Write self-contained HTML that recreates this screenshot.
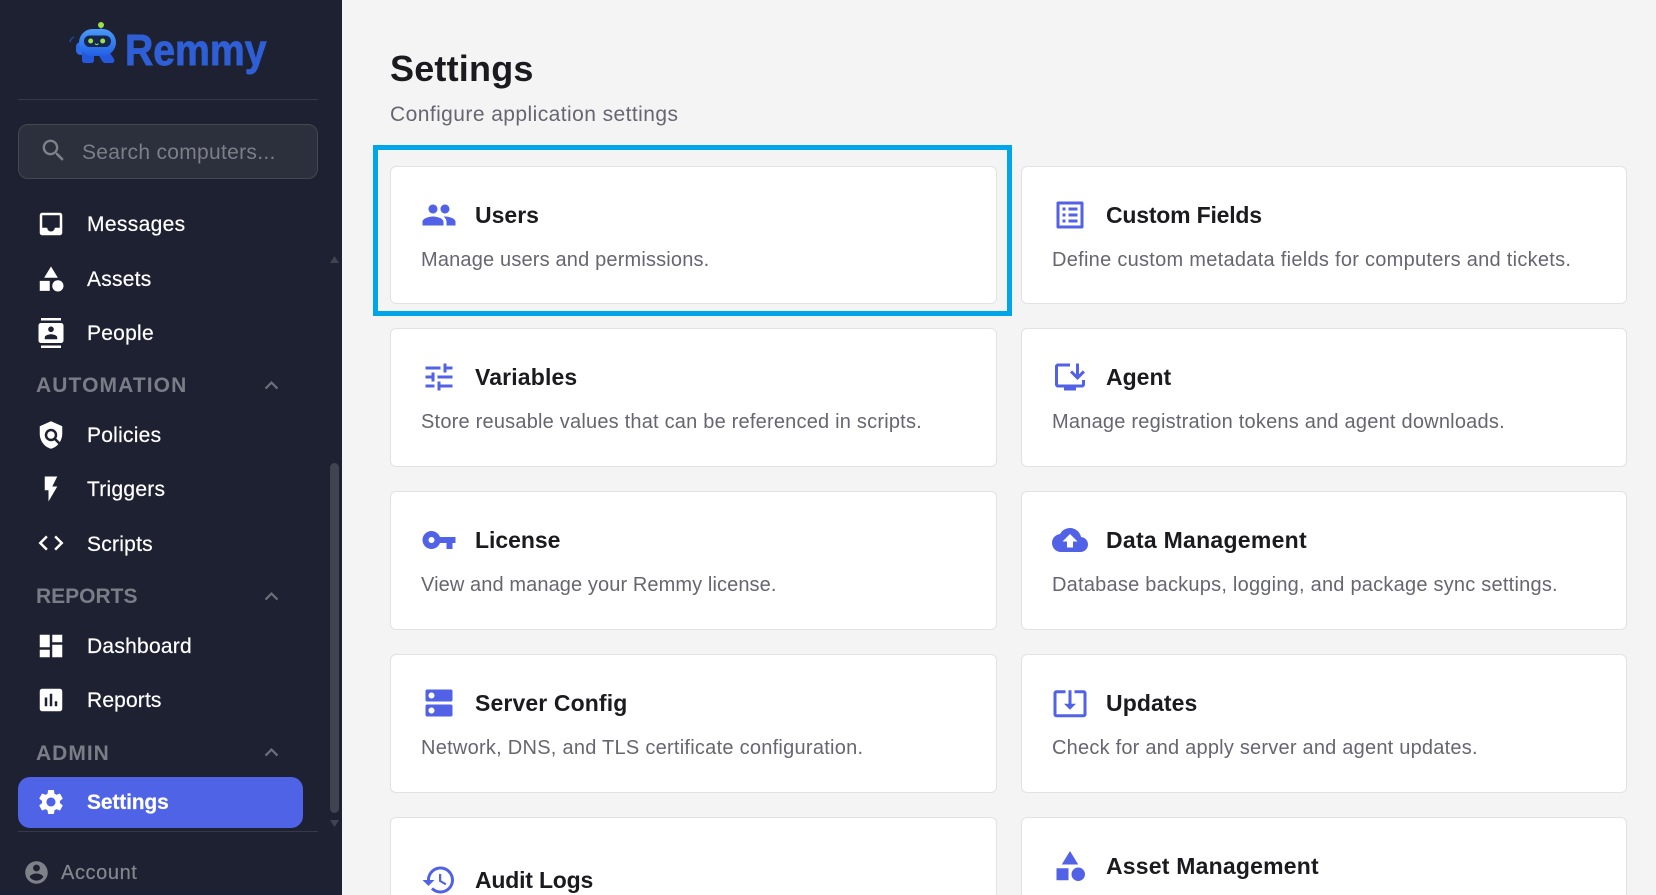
<!DOCTYPE html>
<html lang="en"><head><meta charset="utf-8"><title>Settings</title>
<style>
html,body{margin:0;padding:0;width:1656px;height:895px;overflow:hidden;background:#f4f4f4;font-family:"Liberation Sans",Arial,sans-serif}
*{box-sizing:border-box}
#root{position:relative;width:1656px;height:895px;overflow:hidden;background:#f4f4f4}
.a{position:absolute}
#side{position:absolute;left:0;top:0;width:342px;height:895px;background:#1d2131;color:#fff;overflow:hidden}
.nav{position:absolute;left:87px;font-size:21px;line-height:30px;letter-spacing:.25px;color:#fff;white-space:nowrap;-webkit-text-stroke:.2px #fff}
.ni{position:absolute;left:36px;width:30px;height:30px;fill:#fff}
.sec{position:absolute;left:36px;font-size:21px;font-weight:700;line-height:30px;color:#7a7d88;white-space:nowrap}
.chev{position:absolute;left:258px;width:27px;height:27px;fill:#6c6f7a}
.card{position:absolute;width:607px;height:139px;background:#fff;border:1px solid #e2e2e2;border-radius:6px}
.ci{position:absolute;left:30px;top:30px;width:36px;height:36px;fill:#5262e6}
.t{position:absolute;left:84px;top:33px;font-size:23px;font-weight:700;line-height:30px;color:#1b1b1f;white-space:nowrap}
.d{position:absolute;left:30px;top:78px;font-size:20px;line-height:30px;color:#666670;white-space:nowrap}
</style></head><body>
<div id="root">
<div id="side">
  <svg class="a" style="left:66px;top:18px" width="56" height="50" viewBox="66 18 56 50">
    <defs><linearGradient id="rb" x1="0" y1="0" x2="0" y2="1"><stop offset="0" stop-color="#4a9af8"/><stop offset="1" stop-color="#2260e4"/></linearGradient></defs>
    <path d="M74 37c-2 1-4 3-4 5" fill="none" stroke="#1d4a9e" stroke-width="1.500"/>
    <path d="M101 25v6" stroke="#2a50a8" stroke-width="2"/>
    <circle cx="101" cy="25" r="3" fill="#9be04a"/>
    <rect x="76" y="42" width="9" height="13" rx="4.500" fill="#2c6ce6"/>
    <path d="M82 48h12v12c0 2-1 3-3 3h-6c-2 0-3-1-3-3z" fill="#2558dc"/>
    <path d="M96 50h12l6 9c1 2 0 4-2 4h-7c-1 0-2-1-3-2z" fill="#2558dc"/>
    <rect x="79" y="29" width="37" height="27" rx="13.500" fill="url(#rb)"/>
    <rect x="84" y="35.500" width="27" height="11.500" rx="5.700" fill="#16274f"/>
    <circle cx="90.700" cy="41" r="2.500" fill="#9be04a"/>
    <circle cx="102.700" cy="41" r="2.500" fill="#9be04a"/>
    <path d="M95 43.500c1 1.500 2.500 1.500 3.500 0" fill="none" stroke="#9be04a" stroke-width="1"/>
  </svg>
  <div class="a" style="left:125px;top:24px;font-size:44px;line-height:54px;font-weight:700;color:#2f5fd6;-webkit-text-stroke:.9px #2f5fd6;transform:scaleX(.89);transform-origin:0 0">Remmy</div>
  <div class="a" style="left:18px;top:99px;width:300px;height:1px;background:#363a48"></div>
  <div class="a" style="left:18px;top:124px;width:300px;height:55px;background:#2c2f3c;border:1px solid #444754;border-radius:10px"></div>
  <svg class="a" style="left:39px;top:136px;fill:#7f8189" width="29" height="29" viewBox="0 0 24 24"><path d="M15.500 14h-.79l-.28-.27C15.410 12.590 16 11.110 16 9.500 16 5.910 13.090 3 9.500 3S3 5.910 3 9.500 5.910 16 9.500 16c1.610 0 3.090-.59 4.230-1.570l.27.28v.79l5 4.990L20.490 19l-4.990-5zm-6 0C7.010 14 5 11.990 5 9.500S7.010 5 9.500 5 14 7.010 14 9.500 11.990 14 9.500 14z"/></svg>
  <div class="a" style="left:82px;top:138px;font-size:21px;line-height:30px;letter-spacing:.3px;color:#7c7f88;white-space:nowrap">Search computers...</div>

  <svg class="ni" style="top:209px" viewBox="0 0 24 24"><path d="M19 3H4.990c-1.110 0-1.980.89-1.980 2L3 19c0 1.100.88 2 1.990 2H19c1.100 0 2-.9 2-2V5c0-1.110-.9-2-2-2zm0 12h-4c0 1.660-1.350 3-3 3s-3-1.340-3-3H4.990V5H19v10z"/></svg>
  <div class="nav" style="top:210px;letter-spacing:.35px">Messages</div>
  <svg class="ni" style="top:264px" viewBox="0 0 24 24"><path d="M12 2l-5.500 9h11z"/><circle cx="17.500" cy="17.500" r="4.500"/><path d="M3 13.500h8v8H3z"/></svg>
  <div class="nav" style="top:265px">Assets</div>
  <svg class="ni" style="top:318px" viewBox="0 0 24 24"><path d="M20 0H4v2h16V0zM4 24h16v-2H4v2zM20 4H4c-1.100 0-2 .9-2 2v12c0 1.100.9 2 2 2h16c1.100 0 2-.9 2-2V6c0-1.100-.9-2-2-2zm-8 2.750c1.240 0 2.250 1.010 2.250 2.250s-1.010 2.250-2.250 2.250S9.750 10.240 9.750 9 10.760 6.750 12 6.750zM17 17H7v-1.500c0-1.670 3.330-2.500 5-2.500s5 .83 5 2.500V17z"/></svg>
  <div class="nav" style="top:319px">People</div>

  <div class="sec" style="top:371px;letter-spacing:1.1px">AUTOMATION</div>
  <svg class="chev" style="top:372px" viewBox="0 0 24 24"><path d="M12 8l-6 6 1.410 1.410L12 10.830l4.590 4.580L18 14z"/></svg>

  <svg class="ni" style="top:420px" viewBox="0 0 24 24"><path d="M21 5l-9-4-9 4v6c0 5.550 3.840 10.740 9 12 2.300-.56 4.330-1.900 5.880-3.710l-3.120-3.120c-1.940 1.290-4.580 1.070-6.290-.64-1.950-1.950-1.950-5.120 0-7.070 1.950-1.950 5.120-1.950 7.070 0 1.710 1.710 1.920 4.350.64 6.290l2.900 2.900C20.290 15.690 21 13.380 21 11V5z"/><circle cx="12" cy="12" r="3"/></svg>
  <div class="nav" style="top:421px">Policies</div>
  <svg class="ni" style="top:474px" viewBox="0 0 24 24"><path d="M7 2v11h3v9l7-12h-4l4-8z"/></svg>
  <div class="nav" style="top:475px">Triggers</div>
  <svg class="ni" style="top:528px" viewBox="0 0 24 24"><path d="M9.400 16.600L4.800 12l4.600-4.600L8 6l-6 6 6 6 1.400-1.400zm5.200 0l4.600-4.600-4.600-4.600L16 6l6 6-6 6-1.400-1.400z"/></svg>
  <div class="nav" style="top:530px">Scripts</div>

  <div class="sec" style="top:582px">REPORTS</div>
  <svg class="chev" style="top:583px" viewBox="0 0 24 24"><path d="M12 8l-6 6 1.410 1.410L12 10.830l4.590 4.580L18 14z"/></svg>

  <svg class="ni" style="top:631px" viewBox="0 0 24 24"><path d="M3 13h8V3H3v10zm0 8h8v-6H3v6zm10 0h8V11h-8v10zm0-18v6h8V3h-8z"/></svg>
  <div class="nav" style="top:632px">Dashboard</div>
  <svg class="ni" style="top:685px" viewBox="0 0 24 24"><path d="M19 3H5c-1.100 0-2 .9-2 2v14c0 1.100.9 2 2 2h14c1.100 0 2-.9 2-2V5c0-1.100-.9-2-2-2zM9 17H7v-7h2v7zm4 0h-2V7h2v10zm4 0h-2v-4h2v4z"/></svg>
  <div class="nav" style="top:686px;letter-spacing:.15px">Reports</div>

  <div class="sec" style="top:739px;letter-spacing:1px">ADMIN</div>
  <svg class="chev" style="top:739px" viewBox="0 0 24 24"><path d="M12 8l-6 6 1.410 1.410L12 10.830l4.590 4.580L18 14z"/></svg>

  <div class="a" style="left:18px;top:777px;width:285px;height:51px;background:#4f63e7;border-radius:12px"></div>
  <svg class="ni" style="top:787px" viewBox="0 0 24 24"><path d="M19.140 12.940c.04-.3.06-.61.06-.94 0-.32-.02-.64-.07-.94l2.030-1.580c.18-.14.23-.41.12-.61l-1.920-3.320c-.12-.22-.37-.29-.59-.22l-2.390.96c-.5-.38-1.030-.7-1.620-.94l-.36-2.540c-.04-.24-.24-.41-.48-.41h-3.840c-.24 0-.43.17-.47.41l-.36 2.540c-.59.24-1.130.57-1.620.94l-2.390-.96c-.22-.08-.47 0-.59.22L2.740 8.870c-.12.21-.08.47.12.61l2.030 1.580c-.05.3-.09.63-.09.94s.02.64.07.94l-2.030 1.580c-.18.14-.23.41-.12.61l1.920 3.320c.12.22.37.29.59.22l2.390-.96c.5.38 1.030.7 1.620.94l.36 2.540c.05.24.24.41.48.41h3.840c.24 0 .44-.17.47-.41l.36-2.540c.59-.24 1.130-.56 1.620-.94l2.390.96c.22.08.47 0 .59-.22l1.920-3.320c.12-.22.07-.47-.12-.61l-2.010-1.580zM12 15.600c-1.980 0-3.600-1.620-3.600-3.600s1.620-3.600 3.600-3.600 3.600 1.620 3.600 3.600-1.620 3.600-3.600 3.600z"/></svg>
  <div class="nav" style="top:788px;font-weight:700;letter-spacing:-.15px">Settings</div>

  <div class="a" style="left:18px;top:831px;width:300px;height:1px;background:#363a48"></div>
  <svg class="a" style="left:23px;top:859px;fill:#7f8189" width="27" height="27" viewBox="0 0 24 24"><path d="M12 2C6.480 2 2 6.480 2 12s4.480 10 10 10 10-4.480 10-10S17.520 2 12 2zm0 3c1.660 0 3 1.340 3 3s-1.340 3-3 3-3-1.340-3-3 1.340-3 3-3zm0 14.200c-2.500 0-4.710-1.280-6-3.220.03-1.990 4-3.080 6-3.080 1.990 0 5.970 1.090 6 3.080-1.290 1.940-3.500 3.220-6 3.220z"/></svg>
  <div class="a" style="left:61px;top:858px;font-size:20px;line-height:30px;letter-spacing:.6px;color:#85878f;-webkit-text-stroke:.2px #85878f">Account</div>

  <div class="a" style="left:330px;top:463px;width:9px;height:350px;background:#3f4450;border-radius:5px"></div>
  <svg class="a" style="left:330px;top:256px" width="9" height="7"><path d="M4.500 0L9 7H0z" fill="#3f4450"/></svg>
  <svg class="a" style="left:330px;top:820px" width="9" height="7"><path d="M0 0H9L4.500 7z" fill="#3f4450"/></svg>
</div>

<h1 class="a" style="margin:0;left:390px;top:47px;font-size:36px;line-height:44px;font-weight:700;letter-spacing:.2px;color:#1b1b1f">Settings</h1>
<div class="a" style="left:390px;top:100px;font-size:21px;line-height:30px;letter-spacing:.43px;color:#666670;white-space:nowrap">Configure application settings</div>

<div class="a" style="left:373px;top:145px;width:639px;height:171px;border:5px solid #00a6e8"></div>

<div class="card" style="left:390px;top:166px;height:138px"><svg class="ci" viewBox="0 0 24 24"><path d="M16 11c1.660 0 2.990-1.340 2.990-3S17.660 5 16 5c-1.660 0-3 1.340-3 3s1.340 3 3 3zm-8 0c1.660 0 2.990-1.340 2.990-3S9.660 5 8 5C6.340 5 5 6.340 5 8s1.340 3 3 3zm0 2c-2.330 0-7 1.170-7 3.500V19h14v-2.500c0-2.330-4.670-3.500-7-3.500zm8 0c-.29 0-.62.02-.97.05 1.160.84 1.970 1.970 1.970 3.450V19h6v-2.500c0-2.330-4.670-3.500-7-3.500z"/></svg><div class="t">Users</div><div class="d" style="letter-spacing:.17px">Manage users and permissions.</div></div>
<div class="card" style="left:1021px;top:166px;width:606px;height:138px"><svg class="ci" viewBox="0 0 24 24"><path d="M19 5v14H5V5h14m1.100-2H3.900c-.5 0-.9.4-.9.9v16.200c0 .4.4.9.9.9h16.200c.4 0 .9-.5.9-.9V3.900c0-.5-.5-.9-.9-.9zM11 7h6v2h-6V7zm0 4h6v2h-6v-2zm0 4h6v2h-6zM7 7h2v2H7zm0 4h2v2H7zm0 4h2v2H7z"/></svg><div class="t" style="letter-spacing:-.2px">Custom Fields</div><div class="d" style="letter-spacing:.28px">Define custom metadata fields for computers and tickets.</div></div>

<div class="card" style="left:390px;top:328px"><svg class="ci" viewBox="0 0 24 24"><path d="M3 17v2h6v-2H3zM3 5v2h10V5H3zm10 16v-2h8v-2h-8v-2h-2v6h2zM7 9v2H3v2h4v2h2V9H7zm14 4v-2H11v2h10zm-6-4h2V7h4V5h-4V3h-2v6z"/></svg><div class="t" style="letter-spacing:.15px">Variables</div><div class="d" style="letter-spacing:.21px">Store reusable values that can be referenced in scripts.</div></div>
<div class="card" style="left:1021px;top:328px;width:606px"><svg class="ci" viewBox="0 0 24 24"><path d="M20 17H4V5h8V3H4c-1.110 0-2 .89-2 2v12c0 1.100.89 2 2 2h4v2h8v-2h4c1.100 0 2-.9 2-2v-3h-2v3z"/><path d="M17 14l5-5-1.410-1.410L18 10.170V3h-2v7.170l-2.590-2.580L12 9z"/></svg><div class="t">Agent</div><div class="d" style="letter-spacing:.22px">Manage registration tokens and agent downloads.</div></div>

<div class="card" style="left:390px;top:491px"><svg class="ci" viewBox="0 0 24 24"><path d="M12.650 10C11.830 7.670 9.610 6 7 6c-3.310 0-6 2.690-6 6s2.690 6 6 6c2.610 0 4.830-1.670 5.650-4H17v4h4v-4h2v-4H12.650zM7 14c-1.100 0-2-.9-2-2s.9-2 2-2 2 .9 2 2-.9 2-2 2z"/></svg><div class="t" style="letter-spacing:-.05px">License</div><div class="d" style="letter-spacing:.1px">View and manage your Remmy license.</div></div>
<div class="card" style="left:1021px;top:491px;width:606px"><svg class="ci" viewBox="0 0 24 24"><path d="M19.350 10.040C18.670 6.590 15.640 4 12 4 9.110 4 6.600 5.640 5.350 8.040 2.340 8.360 0 10.910 0 14c0 3.310 2.690 6 6 6h13c2.760 0 5-2.240 5-5 0-2.640-2.050-4.780-4.650-4.960zM14 13v4h-4v-4H7l5-5 5 5h-3z"/></svg><div class="t" style="letter-spacing:.27px">Data Management</div><div class="d" style="letter-spacing:.23px">Database backups, logging, and package sync settings.</div></div>

<div class="card" style="left:390px;top:654px"><svg class="ci" viewBox="0 0 24 24"><path d="M20 13H4c-.55 0-1 .45-1 1v6c0 .55.45 1 1 1h16c.55 0 1-.45 1-1v-6c0-.55-.45-1-1-1zM7 19c-1.100 0-2-.9-2-2s.9-2 2-2 2 .9 2 2-.9 2-2 2zM20 3H4c-.55 0-1 .45-1 1v6c0 .55.45 1 1 1h16c.55 0 1-.45 1-1V4c0-.55-.45-1-1-1zM7 9c-1.100 0-2-.9-2-2s.9-2 2-2 2 .9 2 2-.9 2-2 2z"/></svg><div class="t" style="letter-spacing:.12px">Server Config</div><div class="d" style="letter-spacing:.26px">Network, DNS, and TLS certificate configuration.</div></div>
<div class="card" style="left:1021px;top:654px;width:606px"><svg class="ci" viewBox="0 0 24 24"><path d="M12 16.500l4-4h-3v-9h-2v9H8l4 4zm9-13h-6v1.990h6v14.030H3V5.490h6V3.500H3c-1.100 0-2 .9-2 2v14c0 1.100.9 2 2 2h18c1.100 0 2-.9 2-2v-14c0-1.100-.9-2-2-2z"/></svg><div class="t" style="letter-spacing:.1px">Updates</div><div class="d" style="letter-spacing:.22px">Check for and apply server and agent updates.</div></div>

<div class="card" style="left:390px;top:817px;height:78px;border-bottom:0;border-radius:6px 6px 0 0"><svg class="ci" style="top:44px;height:33px;overflow:hidden" viewBox="0 0 24 22"><path d="M13 3c-4.970 0-9 4.030-9 9H1l3.890 3.890.07.14L9 12H6c0-3.870 3.130-7 7-7s7 3.130 7 7-3.130 7-7 7c-1.930 0-3.680-.79-4.940-2.060l-1.420 1.420C8.270 19.990 10.510 21 13 21c4.970 0 9-4.030 9-9s-4.030-9-9-9zm-1 5v5l4.280 2.540.72-1.210-3.500-2.080V8H12z"/></svg><div class="t" style="top:47px;letter-spacing:-.2px">Audit Logs</div></div>
<div class="card" style="left:1021px;top:817px;width:606px;height:78px;border-bottom:0;border-radius:6px 6px 0 0"><svg class="ci" viewBox="0 0 24 24"><path d="M12 2l-5.500 9h11z"/><circle cx="17.500" cy="17.500" r="4.500"/><path d="M3 13.500h8v8H3z"/></svg><div class="t" style="letter-spacing:.2px">Asset Management</div></div>
</div>
</body></html>
